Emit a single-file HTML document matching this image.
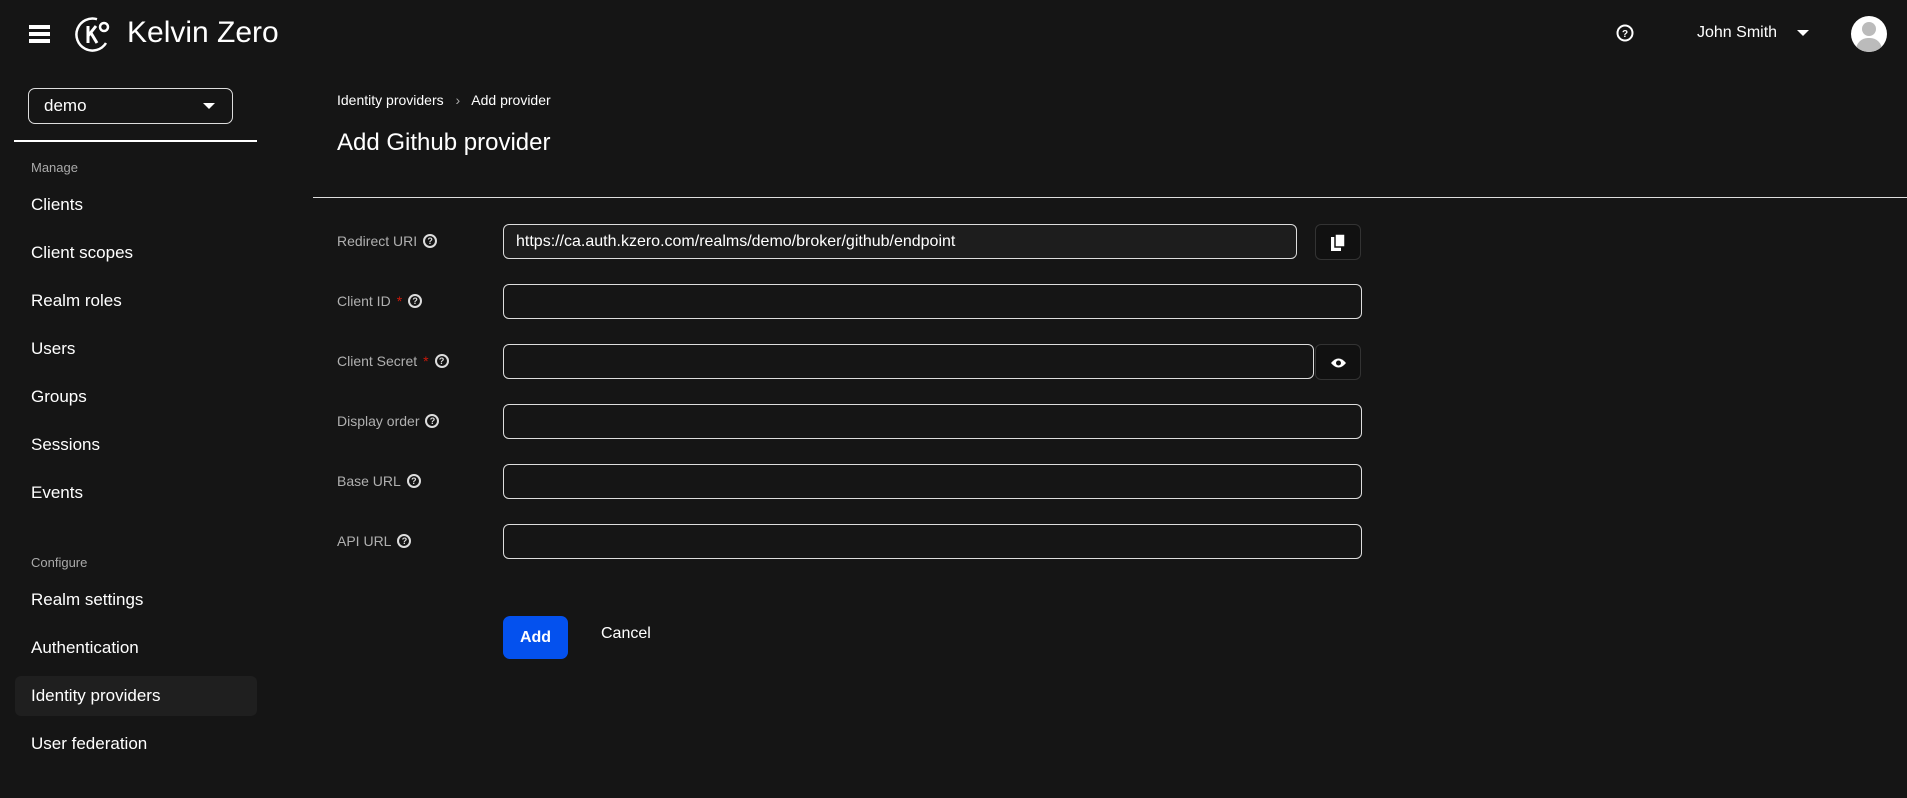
<!DOCTYPE html>
<html><head><meta charset="utf-8"><style>
*{box-sizing:border-box;margin:0;padding:0}
body{width:1907px;height:798px;background:#151515;color:#fff;font-family:"Liberation Sans",sans-serif;position:relative;overflow:hidden}
.a{position:absolute}
.nav{position:absolute;left:31px;font-size:17px;color:#fff}
.sec{position:absolute;left:31px;font-size:13px;color:#aaa}
.lbl{position:absolute;left:337px;font-size:14px;color:#b0b0b0;display:flex;align-items:center;gap:6px}
.req{color:#c9190b}
.q{display:inline-block;width:14px;height:14px;border:2px solid #ddd;border-radius:50%;font-size:9px;font-weight:bold;color:#ddd;text-align:center;line-height:10px}
.inp{position:absolute;left:503px;height:35px;border:1px solid #ddd;border-radius:6px;background:#151515}
.btn{position:absolute;width:46px;height:36px;border:1px solid #333;border-radius:6px;background:#111}
</style></head><body>
<div class="a" style="left:29px;top:25px;width:21px;height:4px;background:#fff"></div>
<div class="a" style="left:29px;top:32px;width:21px;height:4px;background:#fff"></div>
<div class="a" style="left:29px;top:39px;width:21px;height:4px;background:#fff"></div>
<svg class="a" style="left:75px;top:15px" width="40" height="40" viewBox="0 0 40 40"><path d="M31 28 A16 16 0 1 1 22 4.2" fill="none" stroke="#fff" stroke-width="2.5"/><path d="M13 11 V28 M13 21 L21 11 M16 18 L22 28" stroke="#fff" stroke-width="3" fill="none"/><circle cx="29" cy="12" r="4" fill="none" stroke="#fff" stroke-width="2.5"/></svg>
<div class="a" style="left:127px;top:16px;font-size:30px;color:#fff">Kelvin Zero</div>
<svg class="a" style="left:1616px;top:24px" width="18" height="18" viewBox="0 0 18 18"><circle cx="9" cy="9" r="7.5" fill="none" stroke="#fff" stroke-width="2"/><text x="9" y="13" font-size="10" font-weight="bold" fill="#fff" text-anchor="middle" font-family="Liberation Sans">?</text></svg>
<div class="a" style="left:1697px;top:24px;font-size:16px">John Smith</div>
<div class="a" style="left:1797px;top:30px;border-left:6px solid transparent;border-right:6px solid transparent;border-top:6px solid #fff"></div>
<div class="a" style="left:1851px;top:16px;width:36px;height:36px;border-radius:50%;background:#fff;overflow:hidden"><div class="a" style="left:11px;top:6px;width:14px;height:14px;border-radius:50%;background:#bbb"></div><div class="a" style="left:5px;top:22px;width:26px;height:20px;border-radius:12px 12px 0 0;background:#bbb"></div></div>

<div class="a" style="left:28px;top:88px;width:205px;height:36px;border:1px solid #ddd;border-radius:7px"></div>
<div class="a" style="left:44px;top:96px;font-size:17px">demo</div>
<div class="a" style="left:203px;top:103px;border-left:6px solid transparent;border-right:6px solid transparent;border-top:6px solid #fff"></div>
<div class="a" style="left:14px;top:140px;width:243px;height:2px;background:#fff"></div>
<div class="sec" style="top:160px">Manage</div>
<div class="nav" style="top:195px">Clients</div>
<div class="nav" style="top:243px">Client scopes</div>
<div class="nav" style="top:291px">Realm roles</div>
<div class="nav" style="top:339px">Users</div>
<div class="nav" style="top:387px">Groups</div>
<div class="nav" style="top:435px">Sessions</div>
<div class="nav" style="top:483px">Events</div>
<div class="sec" style="top:555px">Configure</div>
<div class="nav" style="top:590px">Realm settings</div>
<div class="nav" style="top:638px">Authentication</div>
<div class="a" style="left:15px;top:676px;width:242px;height:40px;background:#1f1f1f;border-radius:6px"></div>
<div class="nav" style="top:686px">Identity providers</div>
<div class="nav" style="top:734px">User federation</div>

<div class="a" style="left:337px;top:92px;font-size:14px">Identity providers <span style="color:#aaa;margin:0 8px">›</span> Add provider</div>
<div class="a" style="left:337px;top:129px;font-size:24px">Add Github provider</div>
<div class="a" style="left:313px;top:197px;width:1594px;height:1px;background:#ddd"></div>

<div class="lbl" style="top:233px">Redirect URI <span class="q">?</span></div>
<div class="inp" style="top:224px;width:794px;background:#1d1d1d;font-size:16px;padding:8px 12px;color:#fff">https://ca.auth.kzero.com/realms/demo/broker/github/endpoint</div>
<div class="btn" style="left:1315px;top:224px"><svg class="a" style="left:15px;top:9px" width="14" height="17" viewBox="0 0 14 17"><rect x="0" y="3" width="10" height="14" fill="#fff"/><rect x="4" y="0" width="10" height="13" fill="#fff" stroke="#111" stroke-width="1.5"/></svg></div>

<div class="lbl" style="top:293px">Client ID <span class="req">*</span> <span class="q">?</span></div>
<div class="inp" style="top:284px;width:859px"></div>

<div class="lbl" style="top:353px">Client Secret <span class="req">*</span> <span class="q">?</span></div>
<div class="inp" style="top:344px;width:811px"></div>
<div class="btn" style="left:1315px;top:344px"><svg class="a" style="left:14px;top:12px" width="17" height="12" viewBox="0 0 17 12"><path d="M1 6 Q8.5 -3 16 6 Q8.5 15 1 6Z" fill="#fff"/><circle cx="8.5" cy="6" r="2.5" fill="#111"/></svg></div>

<div class="lbl" style="top:413px">Display order <span class="q">?</span></div>
<div class="inp" style="top:404px;width:859px"></div>
<div class="lbl" style="top:473px">Base URL <span class="q">?</span></div>
<div class="inp" style="top:464px;width:859px"></div>
<div class="lbl" style="top:533px">API URL <span class="q">?</span></div>
<div class="inp" style="top:524px;width:859px"></div>

<div class="a" style="left:503px;top:616px;width:65px;height:43px;background:#0451ee;border-radius:7px;font-size:16px;font-weight:bold;text-align:center;line-height:43px">Add</div>
<div class="a" style="left:601px;top:625px;font-size:16px">Cancel</div>
</body></html>
